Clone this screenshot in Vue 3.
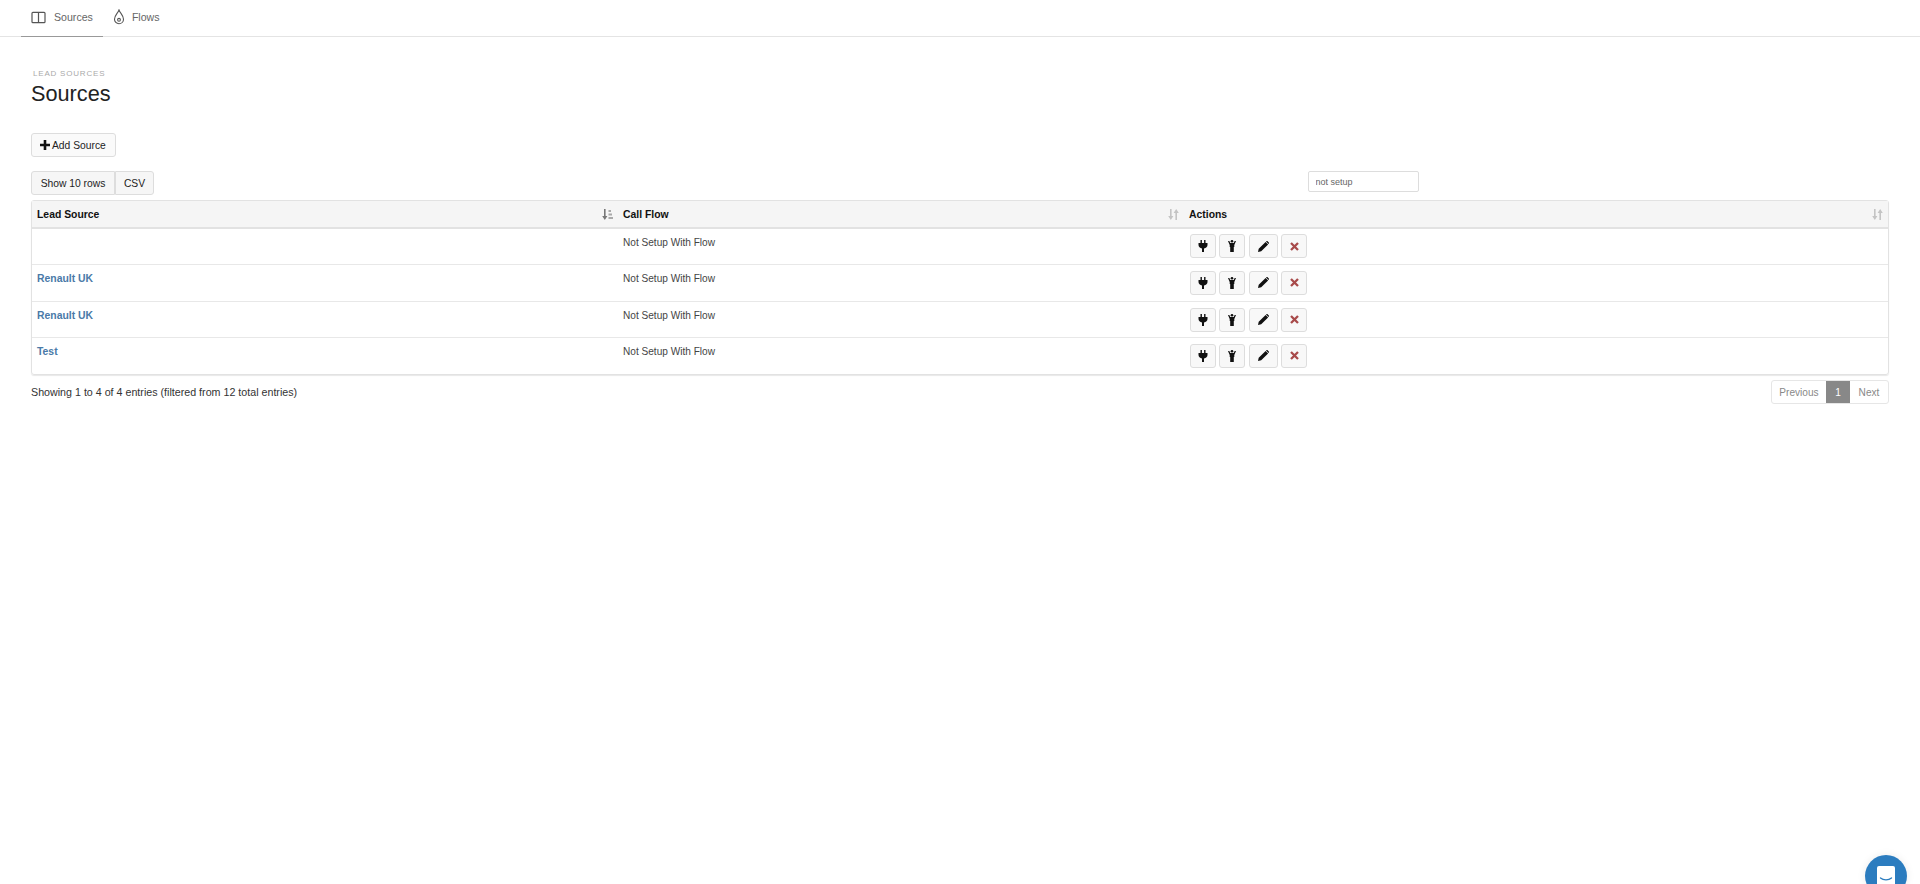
<template>
  <div class="page">
    <!-- Top tabs -->
    <nav class="tabs">
      <a class="tab active">
        <svg width="15" height="13" viewBox="0 0 16 14" fill="none" stroke="#555" stroke-width="1.3">
          <rect x="1" y="1.5" width="14" height="11" rx="1" />
          <path d="M8 1.5V12.5" />
        </svg>
        Sources
      </a>
      <a class="tab">
        <svg width="14" height="16" viewBox="0 0 14 16" fill="none" stroke="#555" stroke-width="1.1">
          <path d="M7 1C8 4 11.5 6.5 11.5 10.2A4.5 4.5 0 0 1 2.5 10.2C2.5 6.5 6 4 7 1Z" />
          <circle cx="7" cy="10.8" r="1.4" />
        </svg>
        Flows
      </a>
    </nav>

    <main class="content">
      <div class="breadcrumb">LEAD SOURCES</div>
      <h1>Sources</h1>

      <button class="btn add-btn">
        <svg width="10" height="10" viewBox="0 0 10 10"><path d="M3.7 0H6.3V3.7H10V6.3H6.3V10H3.7V6.3H0V3.7H3.7Z" fill="#111" /></svg>
        Add Source
      </button>

      <div class="toolbar">
        <div class="btn-group">
          <button class="btn">Show 10 rows</button>
          <button class="btn">CSV</button>
        </div>
        <input class="search" type="text" value="not setup" />
      </div>

      <div class="table-wrap">
        <table>
          <colgroup>
            <col class="col-source" />
            <col class="col-flow" />
            <col />
          </colgroup>
          <thead>
            <tr>
              <th v-for="(col, index) in columns" :key="col">
                {{ col }}
                <svg class="sort" :class="{ on: index === 0 }" width="11" height="11" viewBox="0 0 11 11">
                  <path d="M2 0H3.6V7H5.4L2.8 11L0.2 7H2Z" />
                  <path v-if="index === 0" d="M6.5 1H9V3H6.5ZM6.5 4.5H10V6.5H6.5ZM6.5 8H11V10H6.5Z" opacity=".6" />
                  <path v-else d="M7.4 11H9V4H10.8L8.2 0L5.6 4H7.4Z" />
                </svg>
              </th>
            </tr>
          </thead>
          <tbody>
            <tr v-for="(row, index) in rows" :key="index">
              <td><a class="source-link">{{ row }}</a></td>
              <td>Not Setup With Flow</td>
              <td class="actions">
                <button class="btn icon-btn">
                  <svg width="10" height="12" viewBox="0 0 10 12"><path d="M2.5 0H3.9V3H6.1V0H7.5V3H9.5V5C9.5 6.8 8 8 6 8.5V12H4V8.5C2 8 0.5 6.8 0.5 5V3H2.5Z" fill="#111" /></svg>
                </button>
                <button class="btn icon-btn second">
                  <svg width="10" height="12" viewBox="0 0 10 12"><path d="M1 1H2.3L3.3 3H6.7L7.7 1H9L7.3 5V7H6.8V12H3.2V7H2.7V5Z" fill="#111" /><circle cx="5" cy="1.3" r="1.3" fill="#111" /></svg>
                </button>
                <button class="btn icon-btn wide">
                  <svg width="11" height="11" viewBox="0 0 11 11"><path d="M0 11L0.7 7.8L7.6 0.9L10.1 3.4L3.2 10.3ZM8.4 0.2C8.8 -0.1 9.2 -0.1 9.6 0.2L10.8 1.4C11.1 1.8 11.1 2.2 10.8 2.6L10.5 2.9L8 0.5Z" fill="#111" /></svg>
                </button>
                <button class="btn icon-btn">
                  <svg width="9" height="9" viewBox="0 0 9 9"><path d="M1 1L8 8M8 1L1 8" stroke="#a84a4a" stroke-width="2.3" /></svg>
                </button>
              </td>
            </tr>
          </tbody>
        </table>
      </div>

      <div class="table-footer">
        <span>Showing 1 to 4 of 4 entries (filtered from 12 total entries)</span>
        <div class="pagination">
          <span class="page-item prev">Previous</span>
          <span class="page-item current">1</span>
          <span class="page-item next">Next</span>
        </div>
      </div>
    </main>

    <!-- Chat launcher -->
    <div class="chat">
      <svg width="20" height="22" viewBox="0 0 20 22">
        <path d="M3 0H17A2 2 0 0 1 19 2V22H1V2A2 2 0 0 1 3 0Z" fill="#fff" />
        <path d="M4.5 12C7.5 14.5 12.5 14.5 15.5 12" fill="none" stroke="#2b7cbf" stroke-width="1.4" stroke-linecap="round" />
      </svg>
    </div>
  </div>
</template>

<script setup>
const columns = ['Lead Source', 'Call Flow', 'Actions']
const rows = ['', 'Renault UK', 'Renault UK', 'Test']
</script>

<style>
html, body {
  margin: 0;
  background: #fff;
  overflow: hidden;
}
</style>

<style scoped>
.page {
  height: 884px;
  font-family: "Liberation Sans", Arial, sans-serif;
  font-size: 10.7px;
  color: #222;
}

.tabs {
  display: flex;
  height: 36px;
  padding-left: 21px;
  border-bottom: 1px solid #e4e4e4;
  box-sizing: content-box;
  font-size: 10.6px;
}

.tab {
  display: flex;
  align-items: center;
  gap: 8px;
  height: 34px;
  padding: 0 10px 2px 10px;
  border-bottom: 1px solid transparent;
  color: #666;
}

.tab.active {
  border-bottom-color: #999;
}

.tab:not(.active) {
  gap: 6px;
  padding-left: 9px;
}

.content {
  padding: 31px 31px 0;
}

.breadcrumb {
  font-size: 8px;
  line-height: 11px;
  letter-spacing: 0.8px;
  color: #aaa;
  padding-left: 2px;
}

h1 {
  margin: 0 0 25px;
  font-size: 21.7px;
  line-height: 29px;
  font-weight: 400;
  color: #222;
}

.btn {
  height: 24px;
  padding: 0 8px;
  border: 1px solid #ddd;
  border-radius: 3px;
  background: #f6f6f6;
  color: #222;
  font: inherit;
  font-size: 10.3px;
  white-space: nowrap;
}

.add-btn {
  display: flex;
  align-items: center;
  gap: 2px;
  width: 85px;
  background: #fafafa;
}

.toolbar {
  display: flex;
  justify-content: space-between;
  align-items: flex-start;
  margin-top: 14px;
  height: 29px;
}

.btn-group {
  display: flex;
}

.btn-group .btn:first-child {
  border-radius: 3px 0 0 3px;
  width: 84px;
  padding: 0;
}

.btn-group .btn:last-child {
  border-left: 1px solid #ddd;
  border-radius: 0 3px 3px 0;
  width: 39px;
  padding: 0;
}

.search {
  width: 111px;
  height: 21px;
  box-sizing: border-box;
  margin-right: 470px;
  padding: 0 6.5px;
  border: 1px solid #ddd;
  border-radius: 2px;
  font: 9px "Liberation Sans", Arial, sans-serif;
  color: #666;
}

.table-wrap {
  border: 1px solid #e2e2e2;
  border-radius: 3px;
  box-shadow: 0 1px 1px #e8e8e8;
}

table {
  width: 100%;
  border-collapse: collapse;
  table-layout: fixed;
}

.col-source {
  width: 586px;
}

.col-flow {
  width: 566px;
}

th {
  position: relative;
  height: 26px;
  padding: 0 5px;
  background: #f5f5f5;
  border-bottom: 2px solid #e2e2e2;
  text-align: left;
  font-weight: 700;
  font-size: 10.4px;
  color: #111;
}

.sort {
  position: absolute;
  right: 5px;
  top: 8px;
  fill: #c4c4c4;
}

.sort.on {
  fill: #777;
}

td {
  height: 36px;
  padding: 0 5px;
  border-bottom: 1px solid #e8e8e8;
  vertical-align: top;
  line-height: 28px;
  font-size: 10.1px;
  color: #444;
  box-sizing: border-box;
}

tr:nth-child(even) td {
  height: 37px;
}

tr:last-child td {
  border-bottom: none;
}

.source-link {
  font-weight: 700;
  font-size: 10.4px;
  color: #4a7aa8;
}

td.actions {
  padding: 5px 0 0 6px;
  line-height: 0;
}

tr + tr td.actions {
  padding-top: 6px;
}

.icon-btn {
  width: 26px;
  height: 24px;
  padding: 0;
  margin-right: 3px;
  background: #f8f8f8;
  vertical-align: top;
}

.icon-btn.second {
  margin-right: 4px;
}

.icon-btn svg {
  display: block;
  margin: auto;
}

.icon-btn.wide {
  width: 29px;
}

.table-footer {
  display: flex;
  justify-content: space-between;
  align-items: center;
  margin-top: 5px;
  height: 24px;
  color: #333;
}

.pagination {
  display: flex;
  height: 24px;
  border: 1px solid #e6e6e6;
  border-radius: 3px;
  box-sizing: border-box;
  color: #888;
  font-size: 10.1px;
}

.page-item {
  display: flex;
  align-items: center;
  justify-content: center;
}

.prev {
  width: 54px;
}

.current {
  width: 24px;
  background: #888;
  color: #fff;
}

.next {
  width: 38px;
}

.chat {
  position: fixed;
  left: 1865px;
  top: 855px;
  display: flex;
  justify-content: center;
  width: 42px;
  height: 42px;
  padding-top: 11px;
  box-sizing: border-box;
  border-radius: 50%;
  background: #2b7cbf;
  box-shadow: 0 0 8px rgba(0, 0, 0, 0.08);
}
</style>
